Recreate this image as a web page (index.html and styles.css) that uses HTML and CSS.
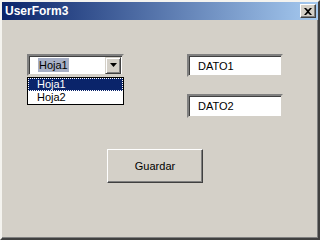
FILE: index.html
```html
<!DOCTYPE html>
<html>
	<head>
		<meta charset="UTF-8">
		<title>UserForm3</title>
		<link rel="stylesheet" href="styles.css">
	</head>
	<body>
		<div class="window">
			<div class="titlebar">
				<span class="title">UserForm3</span>
				<span class="close">
					<svg width="8" height="7" viewBox="0 0 8 7"><path d="M0 0h2l2 2 2-2h2L5 3.5 8 7H6L4 5 2 7H0l3-3.5z" fill="#000"/></svg>
				</span>
			</div>
			<div class="form">
				<div class="fields">
					<div class="combo">
						<span class="combo-text"><span class="sel">Hoja1</span></span>
						<span class="combo-btn">
							<svg width="7" height="4" viewBox="0 0 7 4"><path d="M0 0h7L3.5 4z" fill="#000"/></svg>
						</span>
						<ul class="list">
							<li class="item active">Hoja1</li>
							<li class="item">Hoja2</li>
						</ul>
					</div>
					<div class="textbox">DATO1</div>
					<div class="textbox second">DATO2</div>
				</div>
				<button class="btn">Guardar</button>
			</div>
		</div>
	</body>
</html>
```

FILE: styles.css
```css
body{margin: 0; font-family: "Liberation Sans", Arial, sans-serif; font-size: 11px;}
.window{width: 320px; height: 240px; box-sizing: border-box; background: #d4d0c8;
		border: 2px solid; border-color: #f4f3ef #404040 #404040 #f4f3ef;
		box-shadow: inset -1px -1px #808080;}
.titlebar{height: 18px; display: flex; align-items: center; justify-content: space-between;
		padding: 0 2px 0 3px; background: linear-gradient(to right, #0a246a, #a6caf0);}
.title{color: #fff; font-weight: bold; font-size: 12px;}
.close{width: 16px; height: 14px; box-sizing: border-box; display: flex; align-items: center; justify-content: center;
		background: #d4d0c8; border: 1px solid; border-color: #fff #404040 #404040 #fff;
		box-shadow: inset -1px -1px #808080;}
.form{padding: 34px 0 0 25px;}
.fields{display: grid; grid-template-columns: 97px 96px; column-gap: 63px; row-gap: 17px;}
.combo{position: relative; height: 22px; box-sizing: border-box; background: #fff;
		display: flex; align-items: center; justify-content: space-between;
		border: 2px solid; border-color: #808080 #d4d0c8 #d4d0c8 #808080;
		box-shadow: inset 1px 1px #404040, inset -1px -1px #fff; padding: 1px 1px 1px 9px;}
.sel{background: #a8b0c6; color: #000; padding: 1px 1px;}
.combo-btn{width: 16px; height: 17px; box-sizing: border-box; display: flex; align-items: center; justify-content: center;
		background: #d4d0c8; border: 1px solid; border-color: #d4d0c8 #404040 #404040 #d4d0c8;
		box-shadow: inset 1px 1px #fff, inset -1px -1px #808080;}
.list{position: absolute; left: -2px; top: 21px; width: 97px; box-sizing: border-box; margin: 0; padding: 0;
		list-style: none; background: #fff; border: 1px solid #000;}
.item{height: 13px; line-height: 13px; padding-left: 9px;}
.item.active{background: #0a246a; color: #fff; outline: 1px dotted #fff; outline-offset: -1px;}
.textbox{grid-column: 2; height: 23px; box-sizing: border-box; background: #fff; display: flex; align-items: center;
		padding-left: 9px; border: 2px solid; border-color: #808080 #d4d0c8 #d4d0c8 #808080;
		box-shadow: inset 1px 1px #404040, inset -1px -1px #fff;}
.combo + .textbox{grid-row: 1;}
.second{grid-row: 2; height: 24px;}
.btn{display: block; margin: 31px 0 0 80px; width: 96px; height: 34px; background: #d4d0c8;
		font-family: inherit; font-size: 11px; color: #000; padding: 0;
		border: 1px solid; border-color: #fff #404040 #404040 #fff; box-shadow: inset -1px -1px #808080;}
```
